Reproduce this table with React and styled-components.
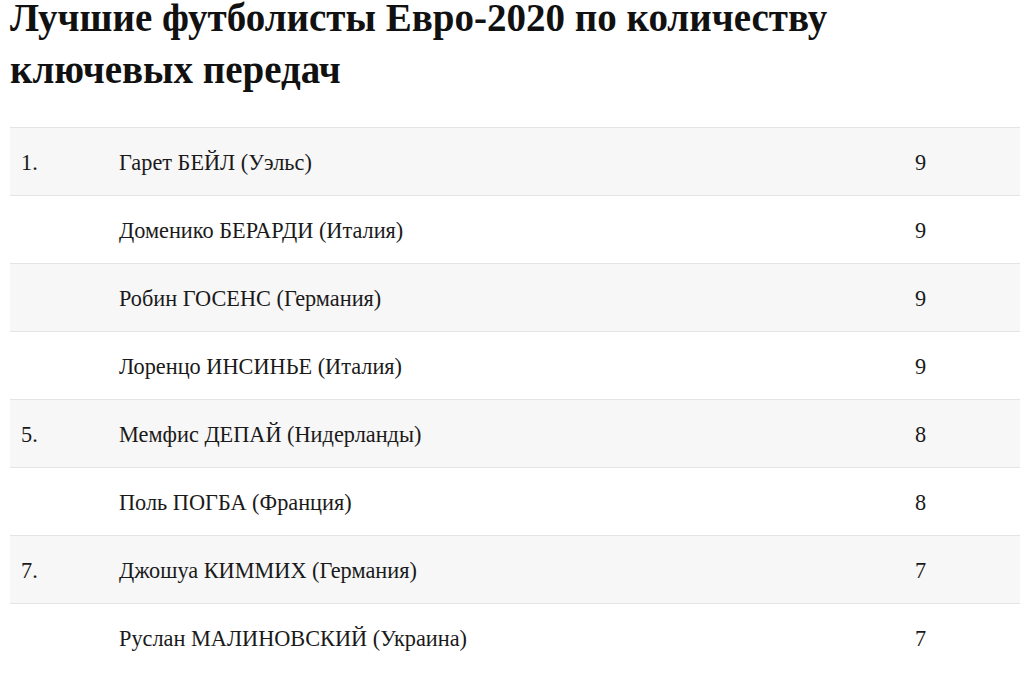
import React from "react";
import styled, { createGlobalStyle } from "styled-components";

const Global = createGlobalStyle`
  html, body { margin: 0; padding: 0; background: #fff; }
  body { font-family: "Liberation Serif", "Times New Roman", serif; color: #1a1a1a; }
`;

const Page = styled.div`
  padding: 0 8px 0 10px;
`;

const Title = styled.h1`
  max-width: 880px;
  margin: -8px 0 31px;
  font-size: 39px;
  line-height: 52px;
  font-weight: 700;
  color: #111;
`;

const Table = styled.div`
  display: flex;
  flex-direction: column;
`;

const Row = styled.div`
  display: grid;
  grid-template-columns: 98px 796px 1fr;
  align-items: center;
  height: 68px;
  box-sizing: border-box;
  padding-left: 11px;
  border-top: 1px solid #e4e4e4;
  background: ${(p) => (p.$shaded ? "#f7f7f7" : "#fff")};
  font-size: 22.3px;
  color: #1a1a1a;
`;

const Cell = styled.div`
  padding-top: 2px;
`;

const rows = [
  ["1.", "Гарет БЕЙЛ (Уэльс)", "9"],
  ["", "Доменико БЕРАРДИ (Италия)", "9"],
  ["", "Робин ГОСЕНС (Германия)", "9"],
  ["", "Лоренцо ИНСИНЬЕ (Италия)", "9"],
  ["5.", "Мемфис ДЕПАЙ (Нидерланды)", "8"],
  ["", "Поль ПОГБА (Франция)", "8"],
  ["7.", "Джошуа КИММИХ (Германия)", "7"],
  ["", "Руслан МАЛИНОВСКИЙ (Украина)", "7"],
];

export default function App() {
  return (
    <Page>
      <Global />
      <Title>
        Лучшие футболисты Евро-2020 по количеству ключевых передач
      </Title>
      <Table>
        {rows.map((r, i) => (
          <Row key={i} $shaded={i % 2 === 0}>
            <Cell>{r[0]}</Cell>
            <Cell>{r[1]}</Cell>
            <Cell>{r[2]}</Cell>
          </Row>
        ))}
      </Table>
    </Page>
  );
}
